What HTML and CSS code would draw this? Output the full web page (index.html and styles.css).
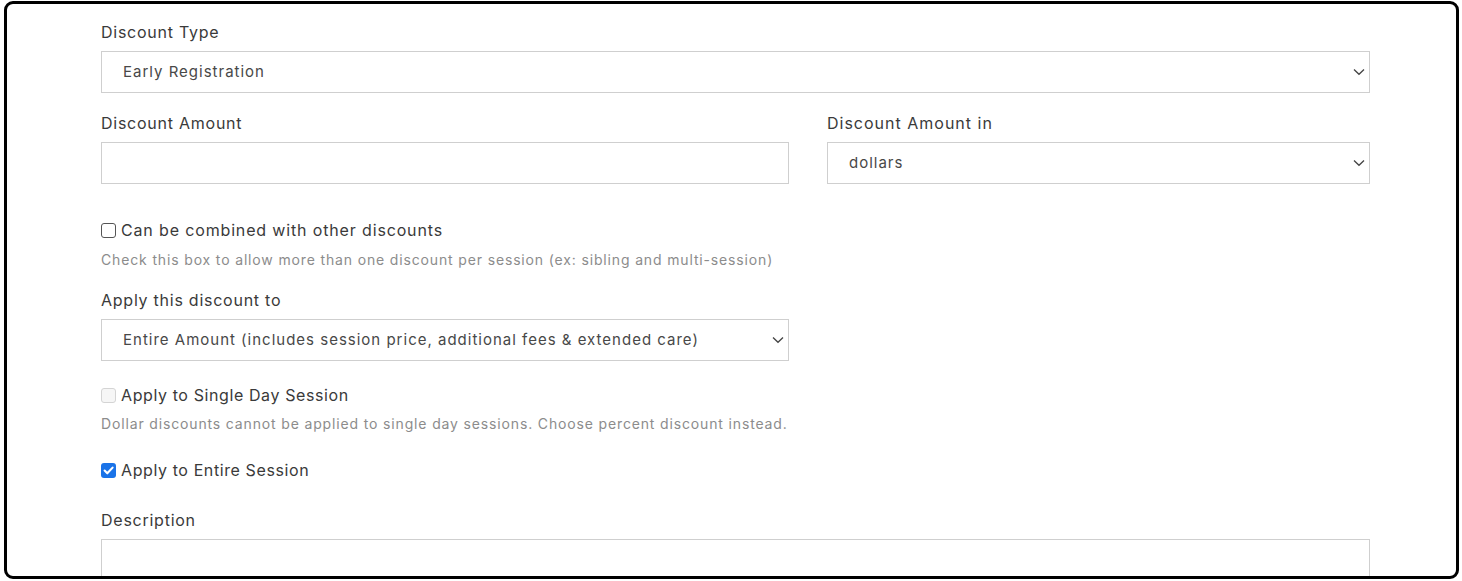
FILE: index.html
```html
<!DOCTYPE html>
<html>
<head>
<meta charset="utf-8">
<link rel="stylesheet" href="styles.css">
</head>
<body>
<div class="frame">
  <form class="form">
    <div class="field f-type">
      <div class="label">Discount Type</div>
      <div class="select">
        <span class="value">Early Registration</span>
        <svg class="chev" width="12" height="8" viewBox="0 0 12 8"><path d="M1 1.5 L6 6.3 L11 1.5" fill="none" stroke="#444" stroke-width="1.3"/></svg>
      </div>
    </div>

    <div class="row f-amount">
      <div class="field col-left">
        <div class="label">Discount Amount</div>
        <div class="input"></div>
      </div>
      <div class="field col-right">
        <div class="label l-in">Discount Amount in</div>
        <div class="select">
          <span class="value">dollars</span>
          <svg class="chev" width="12" height="8" viewBox="0 0 12 8"><path d="M1 1.5 L6 6.3 L11 1.5" fill="none" stroke="#444" stroke-width="1.3"/></svg>
        </div>
      </div>
    </div>

    <div class="check f-combine">
      <span class="box"></span>
      <span class="check-label">Can be combined with other discounts</span>
    </div>
    <div class="help h-combine">Check this box to allow more than one discount per session (ex: sibling and multi-session)</div>

    <div class="field f-apply">
      <div class="label">Apply this discount to</div>
      <div class="select half">
        <span class="value">Entire Amount (includes session price, additional fees &amp; extended care)</span>
        <svg class="chev" width="12" height="8" viewBox="0 0 12 8"><path d="M1 1.5 L6 6.3 L11 1.5" fill="none" stroke="#444" stroke-width="1.3"/></svg>
      </div>
    </div>

    <div class="check f-single">
      <span class="box disabled"></span>
      <span class="check-label narrow">Apply to Single Day Session</span>
    </div>
    <div class="help h-single">Dollar discounts cannot be applied to single day sessions. Choose percent discount instead.</div>

    <div class="check f-entire">
      <span class="box checked"><svg width="15" height="15" viewBox="0 0 15 15"><path d="M3.6 7.6 L6.3 10.3 L11.6 4.6" fill="none" stroke="#fff" stroke-width="2.1" stroke-linecap="round" stroke-linejoin="round"/></svg></span>
      <span class="check-label narrow">Apply to Entire Session</span>
    </div>

    <div class="field f-desc">
      <div class="label">Description</div>
      <div class="textarea"></div>
    </div>
  </form>
</div>
</body>
</html>
```

FILE: styles.css
```css
html, body {
  margin: 0;
  padding: 0;
  background: #ffffff;
}
body {
  height: 581px;
  overflow: hidden;
  font-family: "Inter", "Noto Sans", sans-serif;
  color: #333333;
}
.frame {
  box-sizing: border-box;
  margin: 1px 0 0 4px;
  width: 1455px;
  height: 578px;
  border: 3px solid #000000;
  border-radius: 9px;
  background: #ffffff;
  overflow: hidden;
}
.form {
  padding: 18px 86px 0 94px;
}
.label {
  font-size: 16px;
  line-height: 20px;
  letter-spacing: 0.75px;
  color: #3a3a3a;
  margin-bottom: 9px;
}
.label.l-in {
  letter-spacing: 1px;
}
.select, .input, .textarea {
  box-sizing: border-box;
  height: 42px;
  border: 1px solid #cfcfcf;
  background: #ffffff;
  display: flex;
  align-items: center;
  justify-content: space-between;
  padding: 0 4px 0 21px;
}
.select .value {
  font-size: 15px;
  line-height: 18px;
  padding-bottom: 1px;
  letter-spacing: 1px;
  color: #484848;
}
.select.half {
  width: 688px;
}
.textarea {
  height: 60px;
}
.chev {
  display: block;
}
.row {
  display: flex;
  gap: 38px;
}
.col-left {
  width: 688px;
}
.col-right {
  flex: 1;
}
.f-amount {
  margin-top: 20px;
}
.check {
  display: flex;
  align-items: center;
  height: 22px;
}
.box {
  box-sizing: border-box;
  width: 15px;
  height: 15px;
  border: 1px solid #555555;
  border-radius: 3px;
  margin-right: 5px;
  background: #ffffff;
  display: block;
}
.box.disabled {
  border-color: #d4d4d4;
  background: #f6f6f6;
}
.box.checked {
  border: none;
  background: #1a73e8;
}
.box.checked svg {
  display: block;
}
.check-label {
  font-size: 16px;
  letter-spacing: 0.85px;
  color: #3a3a3a;
}
.check-label.narrow {
  letter-spacing: 0.6px;
}
.help {
  font-size: 14px;
  line-height: 18px;
  letter-spacing: 0.85px;
  color: #8c8c8c;
}
.f-combine {
  margin-top: 35px;
}
.h-combine {
  margin-top: 10px;
}
.f-apply {
  margin-top: 21px;
}
.f-single {
  margin-top: 23px;
}
.h-single {
  margin-top: 9px;
}
.f-entire {
  margin-top: 26px;
}
.f-desc {
  margin-top: 29px;
}
```
